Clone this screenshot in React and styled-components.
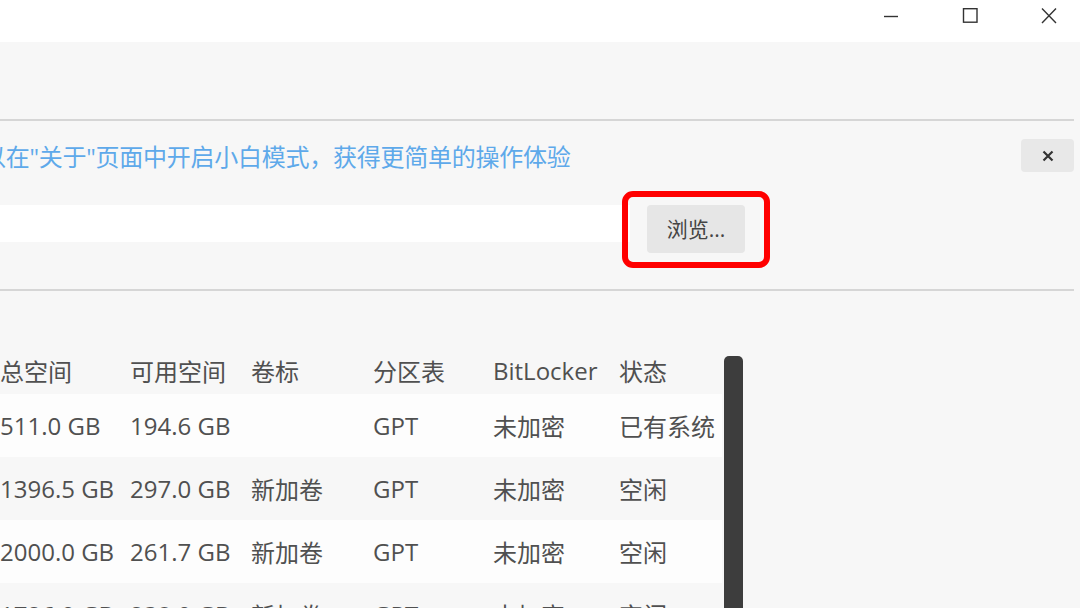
import React from "react";
import styled, { createGlobalStyle } from "styled-components";

const Global = createGlobalStyle`
  html, body { margin: 0; padding: 0; background: #f7f7f7; }
  body { font-family: "Open Sans", "Noto Sans CJK SC", sans-serif; overflow: hidden; }
  #root { width: 1080px; height: 608px; overflow: hidden; }
`;

const Window = styled.div`
  width: 1080px;
  height: 608px;
  overflow: hidden;
  display: flex;
  flex-direction: column;
  background: #f7f7f7;
`;

const TitleBar = styled.div`
  height: 42px;
  flex: none;
  background: #ffffff;
  display: flex;
  justify-content: flex-end;
  align-items: stretch;
  gap: 33px;
  padding-right: 8px;
`;

const WinButton = styled.div`
  width: 46px;
  display: flex;
  align-items: flex-start;
  justify-content: center;
  padding-top: 8px;
  box-sizing: border-box;
  color: #333;
`;

const Page = styled.div`
  margin-left: -40px;
  width: 1114px;
  display: flex;
  flex-direction: column;
`;

const Toolbar = styled.div`
  height: 77px;
`;

const Divider = styled.div`
  height: 2px;
  background: #d6d6d6;
  width: 1114px;
`;

const NoticeRow = styled.div`
  display: flex;
  align-items: center;
  justify-content: space-between;
  padding: 17px 0 0 22px;
  height: 35px;
`;

const NoticeText = styled.div`
  color: #5ea9ea;
  font-size: 24px;
  letter-spacing: -0.25px;
  line-height: 32px;
  white-space: nowrap;
  padding-top: 3px;
`;

const DismissButton = styled.div`
  width: 53px;
  height: 33px;
  background: #e8e8e8;
  border-radius: 4px;
  display: flex;
  align-items: center;
  justify-content: center;
  color: #333;
`;

const PathRow = styled.div`
  display: flex;
  align-items: flex-start;
  gap: 17px;
  padding-top: 32px;
  height: 84px;
`;

const PathInput = styled.div`
  width: 670px;
  height: 37px;
  background: #ffffff;
`;

const BrowseWrap = styled.div`
  position: relative;
`;

const BrowseButton = styled.div`
  width: 98px;
  height: 48px;
  background: #e6e6e6;
  border-radius: 4px;
  display: flex;
  align-items: center;
  justify-content: center;
  font-size: 21px;
  color: #444;
  padding-bottom: 2px;
  box-sizing: border-box;
`;

const Highlight = styled.div`
  position: absolute;
  left: -25px;
  top: -14px;
  width: 148px;
  height: 77px;
  box-sizing: border-box;
  border: 6px solid #ff0000;
  border-radius: 11px;
  pointer-events: none;
`;

const TableArea = styled.div`
  display: flex;
  align-items: flex-start;
  padding-top: 61px;
`;

const Table = styled.div`
  display: grid;
  grid-template-columns: 170px 121px 122px 120px 126px 103px;
  width: 762px;
`;

const Cell = styled.div`
  height: ${(p) => (p.$head ? 42 : 63)}px;
  display: flex;
  align-items: center;
  padding-left: ${(p) => (p.$first ? 40 : 0)}px;
  background: ${(p) => (p.$head ? "#f7f7f7" : p.$odd ? "#fdfdfd" : "#f7f7f7")};
  font-size: 24px;
  color: #505050;
  white-space: nowrap;
  overflow: hidden;
  box-sizing: border-box;
  padding-bottom: ${(p) => (p.$head ? 6 : 0)}px;
`;

const ScrollThumb = styled.div`
  width: 19px;
  height: 300px;
  margin-left: 2px;
  margin-top: 4px;
  background: #3d3d3d;
  border-radius: 5px 5px 0 0;
`;

const headers = ["总空间", "可用空间", "卷标", "分区表", "BitLocker", "状态"];
const rows = [
  ["511.0 GB", "194.6 GB", "", "GPT", "未加密", "已有系统"],
  ["1396.5 GB", "297.0 GB", "新加卷", "GPT", "未加密", "空闲"],
  ["2000.0 GB", "261.7 GB", "新加卷", "GPT", "未加密", "空闲"],
  ["1726.0 GB", "238.0 GB", "新加卷", "GPT", "未加密", "空闲"],
];

export default function App() {
  return (
    <>
      <Global />
      <Window>
        <TitleBar>
          <WinButton>
            <svg width="16" height="16" viewBox="0 0 16 16">
              <line x1="1" y1="8.5" x2="15" y2="8.5" stroke="#333" strokeWidth="1.4" />
            </svg>
          </WinButton>
          <WinButton>
            <svg width="16" height="16" viewBox="0 0 16 16">
              <rect x="1.5" y="0.7" width="13.5" height="13.5" fill="none" stroke="#333" strokeWidth="1.4" />
            </svg>
          </WinButton>
          <WinButton>
            <svg width="16" height="16" viewBox="0 0 16 16">
              <path d="M1 0.5 L15 15 M15 0.5 L1 15" stroke="#333" strokeWidth="1.4" fill="none" />
            </svg>
          </WinButton>
        </TitleBar>
        <Page>
          <Toolbar />
          <Divider />
          <NoticeRow>
            <NoticeText>以在"关于"页面中开启小白模式，获得更简单的操作体验</NoticeText>
            <DismissButton>
              <svg width="12" height="12" viewBox="0 0 12 12">
                <path d="M1.5 1.5 L10.5 10.5 M10.5 1.5 L1.5 10.5" stroke="#333" strokeWidth="2.2" fill="none" />
              </svg>
            </DismissButton>
          </NoticeRow>
          <PathRow>
            <PathInput />
            <BrowseWrap>
              <BrowseButton>浏览...</BrowseButton>
              <Highlight />
            </BrowseWrap>
          </PathRow>
          <Divider />
          <TableArea>
            <Table>
              {headers.map((h, i) => (
                <Cell key={h} $head $first={i === 0}>{h}</Cell>
              ))}
              {rows.map((r, ri) =>
                r.map((c, ci) => (
                  <Cell key={ri + "-" + ci} $first={ci === 0} $odd={ri % 2 === 0}>{c}</Cell>
                ))
              )}
            </Table>
            <ScrollThumb />
          </TableArea>
        </Page>
      </Window>
    </>
  );
}
